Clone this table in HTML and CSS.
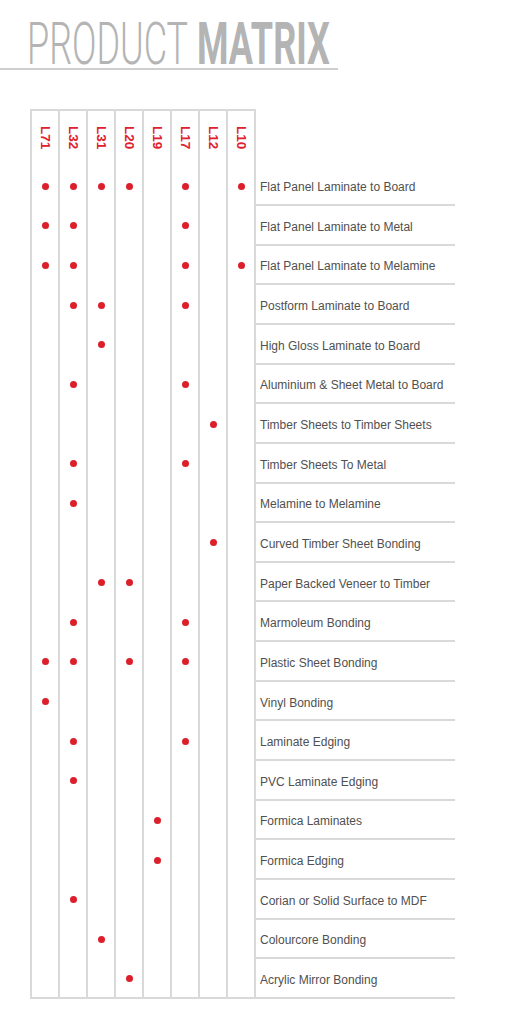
FILE: index.html
```html
<!DOCTYPE html>
<html lang="en">
<head>
<meta charset="utf-8">
<title>Product Matrix</title>
<link rel="stylesheet" href="styles.css">
</head>
<body>
<header class="title-block">
  <h1 class="title"><span class="thin">PRODUCT</span> <span class="bold">MATRIX</span></h1>
</header>
<section class="matrix">
  <div class="row head">
    <span class="h">L71</span><span class="h">L32</span><span class="h">L31</span><span class="h">L20</span><span class="h">L19</span><span class="h">L17</span><span class="h">L12</span><span class="h">L10</span><span class="blank"></span>
  </div>
  <div class="row"><span class="d on"></span><span class="d on"></span><span class="d on"></span><span class="d on"></span><span class="d"></span><span class="d on"></span><span class="d"></span><span class="d on"></span><span class="name">Flat Panel Laminate to Board</span></div>
  <div class="row"><span class="d on"></span><span class="d on"></span><span class="d"></span><span class="d"></span><span class="d"></span><span class="d on"></span><span class="d"></span><span class="d"></span><span class="name">Flat Panel Laminate to Metal</span></div>
  <div class="row"><span class="d on"></span><span class="d on"></span><span class="d"></span><span class="d"></span><span class="d"></span><span class="d on"></span><span class="d"></span><span class="d on"></span><span class="name">Flat Panel Laminate to Melamine</span></div>
  <div class="row"><span class="d"></span><span class="d on"></span><span class="d on"></span><span class="d"></span><span class="d"></span><span class="d on"></span><span class="d"></span><span class="d"></span><span class="name">Postform Laminate to Board</span></div>
  <div class="row"><span class="d"></span><span class="d"></span><span class="d on"></span><span class="d"></span><span class="d"></span><span class="d"></span><span class="d"></span><span class="d"></span><span class="name">High Gloss Laminate to Board</span></div>
  <div class="row"><span class="d"></span><span class="d on"></span><span class="d"></span><span class="d"></span><span class="d"></span><span class="d on"></span><span class="d"></span><span class="d"></span><span class="name">Aluminium &amp; Sheet Metal to Board</span></div>
  <div class="row"><span class="d"></span><span class="d"></span><span class="d"></span><span class="d"></span><span class="d"></span><span class="d"></span><span class="d on"></span><span class="d"></span><span class="name">Timber Sheets to Timber Sheets</span></div>
  <div class="row"><span class="d"></span><span class="d on"></span><span class="d"></span><span class="d"></span><span class="d"></span><span class="d on"></span><span class="d"></span><span class="d"></span><span class="name">Timber Sheets To Metal</span></div>
  <div class="row"><span class="d"></span><span class="d on"></span><span class="d"></span><span class="d"></span><span class="d"></span><span class="d"></span><span class="d"></span><span class="d"></span><span class="name">Melamine to Melamine</span></div>
  <div class="row"><span class="d"></span><span class="d"></span><span class="d"></span><span class="d"></span><span class="d"></span><span class="d"></span><span class="d on"></span><span class="d"></span><span class="name">Curved Timber Sheet Bonding</span></div>
  <div class="row"><span class="d"></span><span class="d"></span><span class="d on"></span><span class="d on"></span><span class="d"></span><span class="d"></span><span class="d"></span><span class="d"></span><span class="name">Paper Backed Veneer to Timber</span></div>
  <div class="row"><span class="d"></span><span class="d on"></span><span class="d"></span><span class="d"></span><span class="d"></span><span class="d on"></span><span class="d"></span><span class="d"></span><span class="name">Marmoleum Bonding</span></div>
  <div class="row"><span class="d on"></span><span class="d on"></span><span class="d"></span><span class="d on"></span><span class="d"></span><span class="d on"></span><span class="d"></span><span class="d"></span><span class="name">Plastic Sheet Bonding</span></div>
  <div class="row"><span class="d on"></span><span class="d"></span><span class="d"></span><span class="d"></span><span class="d"></span><span class="d"></span><span class="d"></span><span class="d"></span><span class="name">Vinyl Bonding</span></div>
  <div class="row"><span class="d"></span><span class="d on"></span><span class="d"></span><span class="d"></span><span class="d"></span><span class="d on"></span><span class="d"></span><span class="d"></span><span class="name">Laminate Edging</span></div>
  <div class="row"><span class="d"></span><span class="d on"></span><span class="d"></span><span class="d"></span><span class="d"></span><span class="d"></span><span class="d"></span><span class="d"></span><span class="name">PVC Laminate Edging</span></div>
  <div class="row"><span class="d"></span><span class="d"></span><span class="d"></span><span class="d"></span><span class="d on"></span><span class="d"></span><span class="d"></span><span class="d"></span><span class="name">Formica Laminates</span></div>
  <div class="row"><span class="d"></span><span class="d"></span><span class="d"></span><span class="d"></span><span class="d on"></span><span class="d"></span><span class="d"></span><span class="d"></span><span class="name">Formica Edging</span></div>
  <div class="row"><span class="d"></span><span class="d on"></span><span class="d"></span><span class="d"></span><span class="d"></span><span class="d"></span><span class="d"></span><span class="d"></span><span class="name">Corian or Solid Surface to MDF</span></div>
  <div class="row"><span class="d"></span><span class="d"></span><span class="d on"></span><span class="d"></span><span class="d"></span><span class="d"></span><span class="d"></span><span class="d"></span><span class="name">Colourcore Bonding</span></div>
  <div class="row"><span class="d"></span><span class="d"></span><span class="d"></span><span class="d on"></span><span class="d"></span><span class="d"></span><span class="d"></span><span class="d"></span><span class="name">Acrylic Mirror Bonding</span></div>
</section>
</body>
</html>
```
FILE: styles.css
```css
* { box-sizing: border-box; }
html, body { margin: 0; padding: 0; background: #fff; }
body { font-family: "Liberation Sans", Arial, sans-serif; width: 505px; }

.title-block {
  width: 338px;
  height: 70px;
  border-bottom: 2px solid #cfcfcf;
  padding-top: 16px;
  padding-left: 27px;
}
.title {
  margin: 0;
  width: 500px;
  font-family: Roboto, "Liberation Sans", sans-serif;
  font-size: 60px;
  line-height: 56px;
  color: #b4b4b4;
  white-space: nowrap;
  transform: scaleX(0.6);
  transform-origin: left top;
}
.title .thin { font-weight: 300; }
.title .bold { font-weight: 700; }

.matrix {
  margin-top: 39px;
  margin-left: 30px;
  width: 426px;
}
.row {
  display: grid;
  grid-template-columns: repeat(7, 28px) 30px 199px;
  height: 39.65px;
}
.row.head { height: 57.4px; }

.h, .d {
  border-left: 2px solid #d9d9d9;
  display: flex;
  justify-content: center;
}
.h:nth-child(8), .d:nth-child(8) { border-right: 2px solid #d9d9d9; }
.h {
  border-top: 2px solid #d9d9d9;
  writing-mode: vertical-rl;
  align-items: center;
  justify-content: flex-start;
  padding-top: 15px;
  color: #e0202c;
  font-size: 13.5px;
  font-weight: 700;
  line-height: 1;
}
.d { align-items: center; }
.d.on::after {
  content: "";
  width: 7px;
  height: 7px;
  border-radius: 50%;
  background: #dc1f2b;
}
.name {
  border-bottom: 2px solid #d9d9d9;
  display: flex;
  align-items: center;
  padding-left: 4px;
  padding-top: 4px;
  font-size: 12px;
  color: #505050;
  white-space: nowrap;
}
.row:last-child .d { border-bottom: 2px solid #d9d9d9; }
```
